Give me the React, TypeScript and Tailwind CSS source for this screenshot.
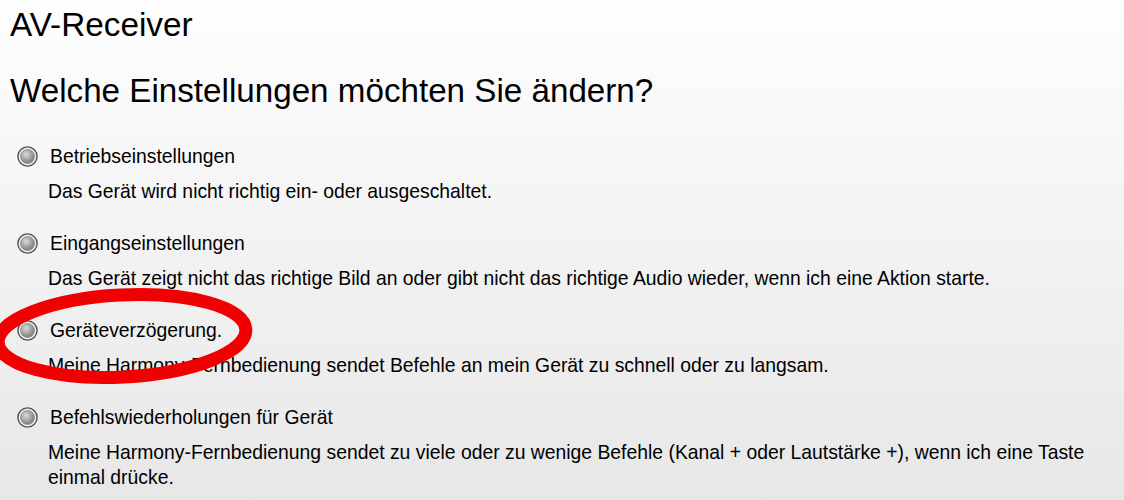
import React from "react";

type Option = { title: string; desc: string[] };

const options: Option[] = [
  { title: "Betriebseinstellungen", desc: ["Das Gerät wird nicht richtig ein- oder ausgeschaltet."] },
  {
    title: "Eingangseinstellungen",
    desc: ["Das Gerät zeigt nicht das richtige Bild an oder gibt nicht das richtige Audio wieder, wenn ich eine Aktion starte."],
  },
  { title: "Geräteverzögerung.", desc: ["Meine Harmony-Fernbedienung sendet Befehle an mein Gerät zu schnell oder zu langsam."] },
  {
    title: "Befehlswiederholungen für Gerät",
    desc: [
      "Meine Harmony-Fernbedienung sendet zu viele oder zu wenige Befehle (Kanal + oder Lautstärke +), wenn ich eine Taste",
      "einmal drücke.",
    ],
  },
];

function Radio({ id }: { id: number }) {
  const gid = `rg${id}`;
  return (
    <svg width="21" height="21" viewBox="0 0 21 21" className="shrink-0">
      <defs>
        <radialGradient id={gid} cx="40%" cy="35%" r="70%">
          <stop offset="0%" stopColor="#dcdcdc" />
          <stop offset="55%" stopColor="#a2a2a2" />
          <stop offset="100%" stopColor="#767676" />
        </radialGradient>
      </defs>
      <circle cx="10.5" cy="10.5" r="9.6" fill="#f2f2f2" stroke="#4f4f4f" strokeWidth="1.4" />
      <circle cx="10.5" cy="10.5" r="7" fill={`url(#${gid})`} stroke="#7c7c7c" strokeWidth="0.7" />
    </svg>
  );
}

export default function App() {
  return (
    <div
      className="relative w-[1124px] h-[500px] overflow-hidden bg-linear-to-b from-[#fefefe] to-[#e7e7e7] text-black px-[10px]"
      style={{ fontFamily: '"Liberation Sans", Arial, sans-serif' }}
    >
      <h1 className="mt-[8px] text-[33.3px] leading-[33px]">AV-Receiver</h1>
      <h2 className="mt-[33px] text-[33.2px] leading-[33px]">Welche Einstellungen möchten Sie ändern?</h2>

      <div className="mt-[37px] flex flex-col gap-[27px]">
        {options.map((o, i) => (
          <div key={o.title} className="text-[19.35px] leading-[25px]">
            <div className="flex items-center gap-[12px] pl-[7px]">
              <Radio id={i} />
              <span>{o.title}</span>
            </div>
            <div className="mt-[10px] pl-[38px]">
              {o.desc.map((d) => (
                <p key={d}>{d}</p>
              ))}
            </div>
          </div>
        ))}
      </div>

      {/* red annotation circle */}
      <svg className="absolute top-0 left-0 pointer-events-none" width="1124" height="500">
        <ellipse
          cx="122"
          cy="336"
          rx="124"
          ry="41"
          fill="none"
          stroke="#f00000"
          strokeWidth="13"
          transform="rotate(-3 122 336)"
        />
      </svg>
    </div>
  );
}
